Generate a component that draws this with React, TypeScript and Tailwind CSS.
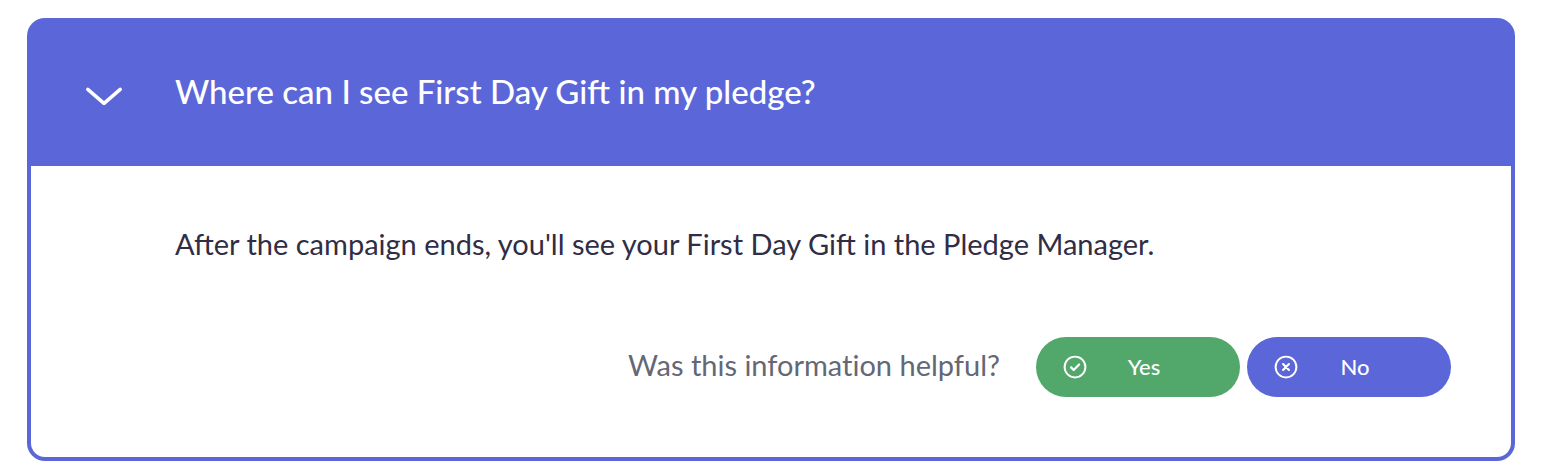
import { useState } from "react";

const answers = [
  { label: "Yes", color: "bg-[#52a86b]", icon: "M8.6 12.3l2.3 2.3 4.6-4.8" },
  { label: "No", color: "bg-[#5b67d8]", icon: "M9.5 9.5l5 5M14.5 9.5l-5 5" },
];

export default function App() {
  const [open, setOpen] = useState(true);

  return (
    <main className="px-[27px] pt-[18px] pb-3 font-['Lato',sans-serif]">
      <section className="rounded-[18px] bg-[#5b67d8] px-1 pb-1">
        <h2>
          <button
            type="button"
            aria-expanded={open}
            aria-controls="answer"
            onClick={() => setOpen(!open)}
            className="flex h-[148px] w-full items-center gap-[52px] pb-0.5 pl-[54px] text-left text-white"
          >
            <svg
              className="mt-3 h-6 w-[38px] shrink-0"
              viewBox="0 0 38 24"
              fill="none"
              stroke="currentColor"
              strokeWidth="3.5"
              strokeLinecap="round"
              strokeLinejoin="round"
              aria-hidden="true"
            >
              <path d="M2.8 4.4L19 18.4 35.2 4.4" />
            </svg>
            <span className="text-[33px] leading-10 font-medium">Where can I see First Day Gift in my pledge?</span>
          </button>
        </h2>

        {open && (
          <div id="answer" className="rounded-b-[14px] bg-white px-[60px] pt-[58px] pb-[60px]">
            <p className="pl-[84px] text-[29px] leading-10 text-[#302d45]">
              After the campaign ends, you'll see your First Day Gift in the Pledge Manager.
            </p>

            <div className="mt-[73px] flex flex-wrap items-center justify-end gap-x-9 gap-y-4">
              <p id="helpful" className="pb-1 text-[29px] leading-10 text-[#646776] [font-variant-ligatures:none]">
                Was this information helpful?
              </p>
              <div role="group" aria-labelledby="helpful" className="flex gap-[7px]">
                {answers.map(({ label, color, icon }) => (
                  <button
                    key={label}
                    type="button"
                    className={`flex h-[60px] w-[204px] items-center rounded-full pr-[65px] pl-[25px] text-[22px] leading-7 font-medium text-white ${color}`}
                  >
                    <svg
                      className="h-7 w-7 shrink-0"
                      viewBox="0 0 24 24"
                      fill="none"
                      stroke="currentColor"
                      strokeWidth="1.7"
                      strokeLinecap="round"
                      strokeLinejoin="round"
                      aria-hidden="true"
                    >
                      <circle cx="12" cy="12" r="8.9" />
                      <path d={icon} strokeWidth="1.9" />
                    </svg>
                    <span className="flex-1 pl-6 text-center">{label}</span>
                  </button>
                ))}
              </div>
            </div>
          </div>
        )}
      </section>
    </main>
  );
}
